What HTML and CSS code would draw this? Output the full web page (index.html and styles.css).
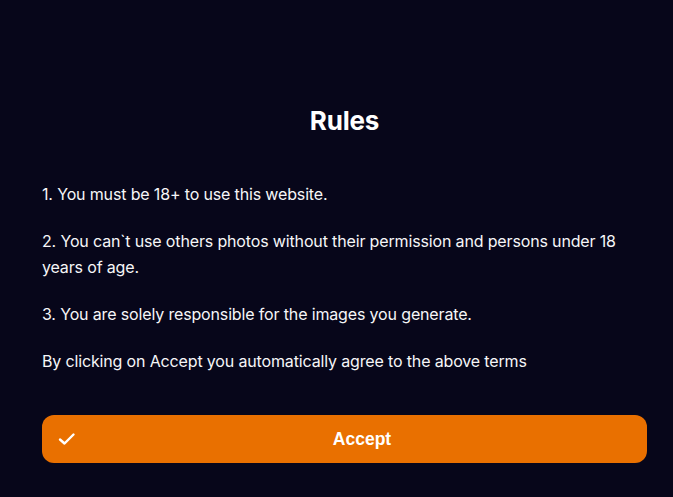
FILE: index.html
```html
<!DOCTYPE html>
<html lang="en">
<head>
<meta charset="utf-8">
<title>Rules</title>
<link rel="stylesheet" href="styles.css">
</head>
<body>
<main class="modal">
  <h1 class="title">Rules</h1>
  <div class="rules">
    <p>1. You must be 18+ to use this website.</p>
    <p>2. You can`t use others photos without their permission and persons under 18 years of age.</p>
    <p>3. You are solely responsible for the images you generate.</p>
    <p>By clicking on Accept you automatically agree to the above terms</p>
  </div>
  <button class="accept" type="button">
    <svg class="check" width="18" height="14" viewBox="0 0 18 14" aria-hidden="true">
      <path d="M2 7.5 L6.5 11.5 L15.5 2.5" fill="none" stroke="#fff" stroke-width="2.4" stroke-linecap="round" stroke-linejoin="round"/>
    </svg>
    <span class="label">Accept</span>
  </button>
</main>
</body>
</html>
```

FILE: styles.css
```css
html, body {
  margin: 0;
  padding: 0;
  background: #07061a;
  height: 100%;
}
.modal {
  box-sizing: border-box;
  padding: 103px 26px 0 42px;
  color: #fff;
  font-family: Inter, "Noto Sans", sans-serif;
}
.title {
  margin: 0 0 42px;
  text-align: center;
  font-size: 26px;
  font-weight: 700;
  line-height: 36px;
  letter-spacing: -0.2px;
}
.rules p {
  margin: 0 0 21px;
  font-size: 16px;
  line-height: 26px;
  letter-spacing: -0.15px;
  color: #f6f6f8;
}
.rules {
  margin-bottom: 41px;
}
.accept {
  width: 100%;
  height: 48px;
  border: none;
  border-radius: 12px;
  background: #e97000;
  display: flex;
  align-items: center;
  padding: 0 16px;
  cursor: pointer;
}
.check {
  display: block;
}
.label {
  flex: 1;
  text-align: center;
  margin-left: 17px;
  color: #fff;
  font-family: "Liberation Sans", Arial, sans-serif;
  font-weight: 700;
  font-size: 17.5px;
}
```
